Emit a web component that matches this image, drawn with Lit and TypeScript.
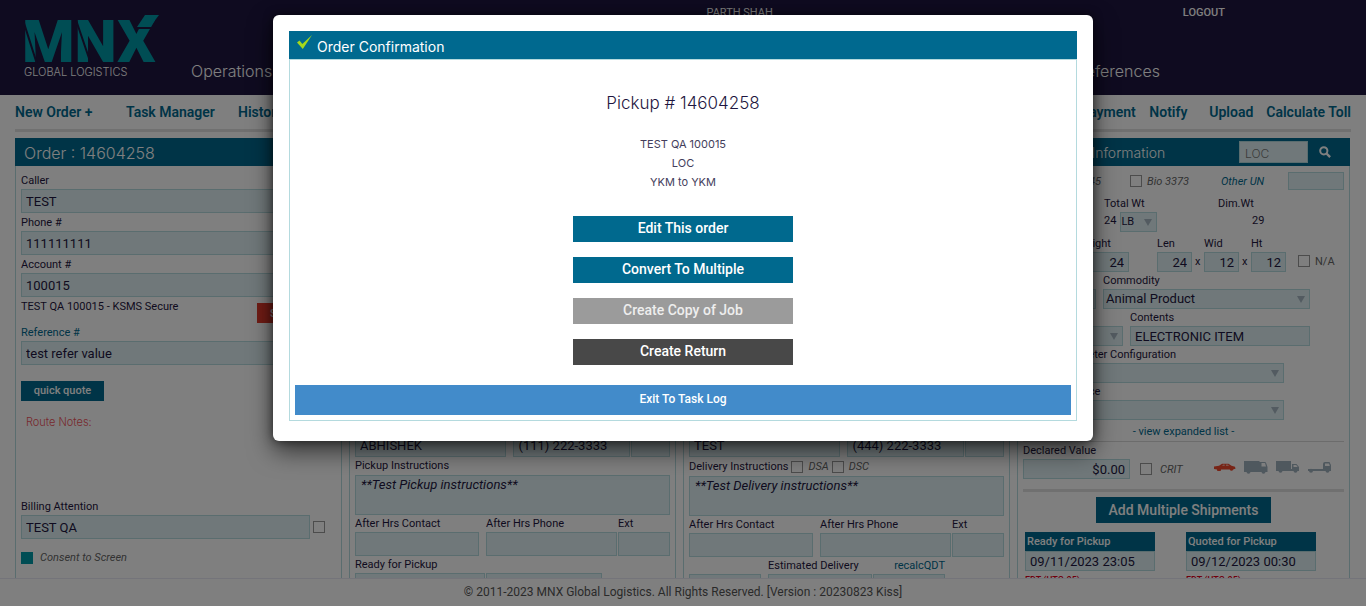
import { LitElement, html, css, svg } from "lit";
import { customElement } from "lit/decorators.js";

const panelHeadings = { order: "Order : 14604258", shipment: "Shipment Information" };

const addressRows = ["Company", "Address", "Address 2", "City", "State", "Country"];

@customElement("app-root")
export class AppRoot extends LitElement {
  static styles = css`
    :host {
      display: block;
      height: 100vh;
      overflow: hidden;
      position: relative;
      background: #fff;
      color: #1e1640;
      font-family: Roboto, "Liberation Sans", sans-serif;
      font-size: 11px;
      --teal: #00698e;
      --line: #b4dade;
      --fill: #e0f1f4;
      --display: Inter, "Open Sans", sans-serif;
    }
    *, *::before, *::after { box-sizing: border-box; }
    a { color: inherit; text-decoration: none; }
    h1, h2, p { margin: 0; font-weight: 400; }
    button { border: 0; padding: 0; margin: 0; font-family: inherit; font-weight: 500; color: #fff; background: var(--teal); cursor: pointer; }

    .page { display: flex; flex-direction: column; height: 100%; }
    .top { display: flex; flex: none; height: 95px; padding-left: 24px; background: #1e1640; color: #fff; }
    .brand { width: 167px; flex: none; padding-top: 14px; }
    .brand svg { display: block; }
    .tagline { font: 300 11px/14px var(--display); margin-top: 1px; }
    .topright { flex: 1; }
    .user { display: flex; justify-content: flex-end; gap: 410px; padding: 5px 141px 0 0; line-height: 15px; font-weight: 500; }
    .user span { font-weight: 400; }
    .mainnav { display: flex; justify-content: space-between; padding: 40px 206px 0 0; font: 300 16px/22px var(--display); }

    .subnav { display: flex; flex: none; justify-content: space-between; margin: 0 15px; height: 37px; border-bottom: 3px solid #e0e0e0; padding-top: 8px; font-size: 14px; line-height: 19px; font-weight: 600; color: var(--teal); }
    .left { display: grid; grid-template-columns: 111px 112px auto; }
    .right { display: grid; grid-template-columns: 69px 60px 57px auto; }

    .work { flex: 1; min-height: 0; overflow: hidden; display: grid; grid-template-columns: 327fr 327fr 327fr 333fr; gap: 7px; padding: 6px 16px 0 15px; }
    .panel { min-width: 0; height: 600px; display: flex; flex-direction: column; }
    .bar { display: flex; align-items: center; flex: none; height: 28px; background: var(--teal); color: #fff; padding: 0 9px; }
    .bar h2 { flex: 1; font: 300 14px/28px var(--display); padding-top: 2px; white-space: nowrap; }
    .bar .number { font-size: 16px; }
    .body { flex: 1; border: 1px solid var(--line); border-width: 0 1px; padding: 5px 5px 0; }
    .body.tight { padding-top: 4px; }

    label, .caption { display: block; line-height: 17px; white-space: nowrap; }
    .roomy label { padding-top: 1px; }
    input, textarea, select { display: block; width: 100%; height: 24px; margin: 0; border: 1px solid var(--line); border-radius: 0; background: var(--fill); color: #1e1640; font: 400 13px/18px Roboto, sans-serif; padding: 0 4px; outline: 0; }
    textarea { height: 40px; resize: none; font-style: italic; padding: 0 5px; overflow: hidden; }
    .low input, .low select { height: 20px; }
    .num { text-align: right; }
    select { appearance: none; padding: 0 20px 0 2px; background-image: url("data:image/svg+xml,%3Csvg xmlns='http://www.w3.org/2000/svg' width='8' height='7'%3E%3Cpath d='M0 0h8L4 7z' fill='%23a6b6c2'/%3E%3C/svg%3E"); background-repeat: no-repeat; background-position: right 4px center; }
    input[type="checkbox"] { appearance: none; flex: none; width: 12px; height: 12px; padding: 0; border: 1px solid #999; background: #fff; }
    input[type="checkbox"].on { border: 0; background: #009aa8; }
    .low input[type="checkbox"] { height: 12px; }
    .em { font-style: italic; color: #666; }
    .link { color: var(--teal); }

    .row { display: flex; }
    .grow { flex: 1; min-width: 0; }
    .mid { align-items: center; }
    .tick { display: flex; align-items: center; gap: 7px; }

    .acct { justify-content: space-between; height: 26px; line-height: 20px; }
    .sop { width: 74px; height: 20px; margin: 6px 5px 0 0; background: #e0392a; font-size: 11px; }
    .quote { display: block; width: 83px; height: 20px; padding-bottom: 1px; margin-top: 16px; font-size: 11px; }
    .notes { min-height: 84px; margin-top: 12px; padding-left: 5px; line-height: 18px; color: #f0525a; font-family: var(--display); font-weight: 300; }
    .billing { align-items: center; gap: 3px; padding-right: 11px; }
    .consent { height: 18px; margin-top: 9px; }

    .trio { display: grid; grid-template-columns: 130fr 131fr 52fr; column-gap: 1px; }
    .trio > :first-child { padding-right: 6px; }
    .contact { grid-template-columns: 158fr 117fr 39fr; }
    .duo { display: grid; grid-template-columns: 130fr 117fr 67fr; gap: 1px; }
    .est { display: grid; grid-template-columns: 78px 104px 72px; column-gap: 1px; }
    .est > :first-child { padding: 17px 6px 0 0; }
    .est .link { text-align: right; }
    .instr { height: 19px; gap: 3px; }
    .instr .tick { gap: 5px; }
    .tall { line-height: 18px; }

    .find { padding-right: 0; }
    .find input { width: 69px; height: 22px; padding: 2px 5px 0; font: 300 12px/18px var(--display); }
    .find input::placeholder { color: #777; opacity: 1; }
    .find button { width: 33px; height: 22px; margin-right: 9px; display: grid; place-items: center; }
    .haz { height: 20px; line-height: 20px; margin-bottom: 4px; }
    .haz .first { display: flex; justify-content: flex-end; padding-right: 29px; }
    .haz .bio { width: 91px; gap: 5px; }
    .haz .other { width: 67px; }
    .haz .un { width: 56px; }
    .haz .un input { height: 18px; }
    .wt { width: 114px; margin-bottom: 3px; }
    .wt .row { gap: 4px; line-height: 17px; }
    .wt select { width: 37px; padding: 0; font-size: 11px; background-position: right 4px center; }
    .dim { width: 126px; }
    .dim p { padding-left: 34px; line-height: 17px; }
    .lead { width: 54px; padding-right: 7px; }
    .weight { flex: 1; padding-right: 28px; }
    .size { width: 47px; }
    .size input { width: 35px; }
    .size .row { gap: 3px; line-height: 20px; }
    .na { width: 46px; gap: 5px; padding-top: 15px; color: #666; }
    .pair { gap: 7px; padding-right: 34px; }
    .com { width: 207px; }
    .cont { width: 180px; }
    .set { padding-right: 60px; }
    .expand { display: block; text-align: center; padding-top: 2px; line-height: 19px; border-bottom: 1px solid #d8d8d8; color: var(--teal); }
    .decl { width: 107px; }
    .crit { gap: 8px; width: 74px; margin-left: 10px; }
    .vehicles { display: flex; gap: 8px; align-items: center; padding-bottom: 4px; }
    .vehicles svg { display: block; }
    .rule { height: 3px; background: #e0e0e0; margin-top: 10px; }
    .multi { display: block; width: 175px; height: 26px; margin: 5px auto 9px; padding-bottom: 1px; font-size: 14px; line-height: 24px; }
    .dates { display: grid; grid-template-columns: 130px 130px; gap: 31px; padding-left: 2px; }
    .dates label { height: 19px; line-height: 19px; padding-left: 2px; background: var(--teal); color: #fff; font-weight: 500; }
    .zone { color: #e0001b; font-size: 9px; line-height: 14px; font-weight: 500; margin-top: 2px; }

    .foot { flex: none; height: 28px; border-top: 1px solid #e8e8f4; background: #fff; text-align: center; font-size: 12px; line-height: 26px; color: #555; position: relative; }

    .shade { position: absolute; inset: 0; background: rgba(0, 0, 0, 0.5); }
    .modal { position: absolute; top: 15px; left: 50%; transform: translateX(-50%); width: min(820px, 92vw); padding: 16px 16px 20px; background: #fff; border-radius: 6px; box-shadow: 0 10px 25px rgba(0, 0, 0, 0.6), 0 0 10px rgba(0, 0, 0, 0.5); }
    .title { display: flex; align-items: flex-start; gap: 4px; height: 28px; padding: 3px 7px 0; background: #00698f; color: #fff; }
    .title h1 { font: 400 14px/25px var(--display); }
    .title svg { display: block; }
    .inner { border: 1px solid var(--line); padding: 31px 5px 5px; display: flex; flex-direction: column; align-items: center; font-family: var(--display); font-weight: 300; line-height: 19px; }
    .inner h2 { font: 300 17px/24px var(--display); margin-bottom: 20px; }
    .inner p { color: #443e5c; }
    .actions { display: grid; gap: 15px; width: 220px; margin: 24px 0 20px; }
    .actions button { height: 26px; font: 500 14px/24px Roboto, sans-serif; padding-bottom: 2px; }
    .actions .copy { background: #9b9b9b; color: #eee; }
    .actions .return { background: #484848; }
    .exit { width: 100%; height: 30px; background: #428bca; font: 500 12px/26px Roboto, sans-serif; padding-bottom: 3px; }
  `;

  private addressFields(prefix: string) {
    return addressRows.map(
      (name) => html`<div class="hold"><label for=${prefix + name}>${name}</label><input id=${prefix + name} /></div>`
    );
  }

  private contactRow(prefix: string, name: string, phone: string) {
    return html`<div class="trio contact">
      <div><label for="${prefix}c">Contact</label><input id="${prefix}c" .value=${name} /></div>
      <div><label for="${prefix}p">Phone</label><input id="${prefix}p" .value=${phone} /></div>
      <div><label for="${prefix}e">Ext</label><input id="${prefix}e" /></div>
    </div>`;
  }

  private afterHours(prefix: string) {
    return html`<div class="trio">
      <div><label for="${prefix}hc">After Hrs Contact</label><input id="${prefix}hc" /></div>
      <div><label for="${prefix}hp">After Hrs Phone</label><input id="${prefix}hp" /></div>
      <div><label for="${prefix}he">Ext</label><input id="${prefix}he" /></div>
    </div>`;
  }

  private size(id: string, label: string, value: string, times: boolean) {
    return html`<div class="size">
      <label for=${id}>${label}</label>
      <div class="row"><input class="num" id=${id} .value=${value} />${times ? html`<span>x</span>` : ""}</div>
    </div>`;
  }

  private logo() {
    return html`<svg width="136" height="50" viewBox="0 0 136 50" role="img" aria-label="MNX">
      <text x="-2" y="48" font-family="Roboto" font-weight="900" font-size="60" fill="#009aa8">MNX</text>
      ${svg`<path d="M-1 6L13 50M52 6L67 50" stroke="#1e1640" stroke-width="2"/>
      <path d="M121 1h14l-9 12h-13z" fill="#009aa8"/>
      <path d="M112 14h16" stroke="#1e1640" stroke-width="2"/>`}
    </svg>`;
  }

  private vehicles() {
    return html`<div class="vehicles">
      <svg width="22" height="8" viewBox="0 0 22 8"><path d="M0 3.500l5-.8L8 .8h6.500l3 2 3.500.9.5 2-2 .6a2 2 0 01-3.800.2H7A2 2 0 013 6.500L0 6z" fill="#f0492c"/><path d="M8 2.500l1.200-.8h1.500v.8zM12 1.700h2l1 .8h-3z" fill="#fff"/></svg>
      <svg width="24" height="13" viewBox="0 0 24 13"><path d="M0 0h15.500v1H21q1 0 1.500 2l1 3v5H0z" fill="#9fb0bd"/><path d="M17.500 2H21l1 3.500h-4.500z" fill="#fff"/><circle cx="4.500" cy="10.700" r="2" fill="#9fb0bd"/><circle cx="19.500" cy="10.700" r="2" fill="#9fb0bd"/></svg>
      <svg width="24" height="12" viewBox="0 0 24 12"><path d="M0 0h15v8h1V3h4.500L23 6v4H0z" fill="#9fb0bd"/><path d="M17.500 4h2.700l1.500 2h-4.200z" fill="#fff"/><circle cx="4.500" cy="9.800" r="2" fill="#9fb0bd"/><circle cx="19.500" cy="9.800" r="2" fill="#9fb0bd"/></svg>
      <svg width="24" height="12" viewBox="0 0 24 12"><path d="M0 8h15V3q0-2 2-2h4.500L23 4v6H0z" fill="#9fb0bd"/><path d="M17 2.500h4l.8 2.500H17z" fill="#fff"/><circle cx="3" cy="9.800" r="2" fill="#9fb0bd"/><circle cx="19.500" cy="9.800" r="2" fill="#9fb0bd"/></svg>
    </div>`;
  }

  render() {
    return html`
      <div class="page">
        <header class="top">
          <div class="brand">${this.logo()}<p class="tagline">GLOBAL LOGISTICS</p></div>
          <div class="topright">
            <div class="user"><span>PARTH SHAH</span><a href="#logout">LOGOUT</a></div>
            <nav class="mainnav"><a href="#operations">Operations</a><a href="#preferences">Preferences</a></nav>
          </div>
        </header>
        <nav class="subnav">
          <div class="left"><a href="#new">New Order +</a><a href="#tasks">Task Manager</a><a href="#history">History</a></div>
          <div class="right"><a href="#payment">Payment</a><a href="#notify">Notify</a><a href="#upload">Upload</a><a href="#toll">Calculate Toll</a></div>
        </nav>
        <main class="work">
          <section class="panel">
            <div class="bar"><h2 class="number">${panelHeadings.order}</h2></div>
            <div class="body roomy">
              <label for="caller">Caller</label><input id="caller" value="TEST" />
              <label for="phone">Phone #</label><input id="phone" value="111111111" />
              <label for="account">Account #</label><input id="account" value="100015" />
              <div class="row acct"><span>TEST QA 100015 - KSMS Secure</span><button class="sop">See SOPs</button></div>
              <label class="link" for="ref">Reference #</label><input id="ref" value="test refer value" />
              <button class="quote">quick quote</button>
              <p class="notes">Route Notes:</p>
              <label for="billing">Billing Attention</label>
              <div class="row billing"><input id="billing" value="TEST QA" /><input type="checkbox" aria-label="Billing attention" /></div>
              <label class="tick consent em"><input class="on" type="checkbox" />Consent to Screen</label>
            </div>
          </section>

          <section class="panel">
            <div class="bar"></div>
            <div class="body tight">
              ${this.addressFields("pu")} ${this.contactRow("pu", "ABHISHEK", "(111) 222-3333")}
              <label class="tall" for="pui">Pickup Instructions</label>
              <textarea id="pui" .value=${"**Test Pickup instructions**"}></textarea>
              ${this.afterHours("pu")}
              <label for="pur">Ready for Pickup</label>
              <div class="duo"><input id="pur" /><input aria-label="Ready time" /></div>
            </div>
          </section>

          <section class="panel">
            <div class="bar"></div>
            <div class="body tight">
              ${this.addressFields("de")} ${this.contactRow("de", "TEST", "(444) 222-3333")}
              <div class="row mid instr">
                <label for="dei">Delivery Instructions</label>
                <label class="tick em"><input type="checkbox" />DSA</label>
                <label class="tick em"><input type="checkbox" />DSC</label>
              </div>
              <textarea id="dei" .value=${"**Test Delivery instructions**"}></textarea>
              ${this.afterHours("de")}
              <div class="est">
                <div><input aria-label="Delivery type" /></div>
                <div><label for="ded">Estimated Delivery</label><input id="ded" /></div>
                <div><a class="caption link" href="#recalc">recalcQDT</a><input aria-label="Delivery time" /></div>
              </div>
            </div>
          </section>

          <section class="panel">
            <div class="bar find">
              <h2>${panelHeadings.shipment}</h2>
              <input placeholder="LOC" aria-label="Location" />
              <button aria-label="Search"><svg width="12" height="12" viewBox="0 0 12 12"><circle cx="4.800" cy="4.800" r="3.600" fill="none" stroke="#fff" stroke-width="2"/><path d="M7.500 7.500l3.600 3.600" stroke="#fff" stroke-width="2.400"/></svg></button>
            </div>
            <div class="body low">
              <div class="row mid haz">
                <label class="grow first em">UN 1845</label>
                <label class="tick bio em"><input type="checkbox" />Bio 3373</label>
                <label class="other em link" for="un">Other UN</label>
                <div class="un"><input id="un" /></div>
              </div>
              <div class="row">
                <div class="grow"></div>
                <div class="wt"><label for="unit">Total Wt</label><div class="row"><span>24</span><select id="unit"><option>LB</option></select></div></div>
                <div class="dim"><span class="caption">Dim.Wt</span><p>29</p></div>
              </div>
              <div class="row">
                <div class="lead"><label for="pcs">Pieces</label><input id="pcs" /></div>
                <div class="weight"><label for="weight">Weight</label><input class="num" id="weight" value="24" /></div>
                ${this.size("len", "Len", "24", true)} ${this.size("wid", "Wid", "12", true)} ${this.size("ht", "Ht", "12", false)}
                <label class="tick na"><input type="checkbox" />N/A</label>
              </div>
              <div class="row pair">
                <div class="grow"><label for="pkg">Package</label><select id="pkg"></select></div>
                <div class="com"><label for="com">Commodity</label><select id="com"><option>Animal Product</option></select></div>
              </div>
              <div class="row pair">
                <div class="grow"><label for="temp">Temperature</label><select id="temp"></select></div>
                <div class="cont"><label for="cont">Contents</label><input id="cont" value="ELECTRONIC ITEM" /></div>
              </div>
              <div class="set"><label for="cfg">Temp. Parameter Configuration</label><select id="cfg"></select></div>
              <div class="set"><label for="dev">Tracking Device</label><select id="dev"></select></div>
              <a class="expand" href="#expand">- view expanded list -</a>
              <label for="decl">Declared Value</label>
              <div class="row">
                <div class="decl"><input class="num" id="decl" value="$0.00" /></div>
                <label class="tick crit em"><input type="checkbox" />CRIT</label>
                ${this.vehicles()}
              </div>
              <div class="rule"></div>
              <button class="multi">Add Multiple Shipments</button>
              <div class="dates">
                <div><label for="rp">Ready for Pickup</label><input id="rp" value="09/11/2023 23:05" /><p class="zone">EDT (UTC-05)</p></div>
                <div><label for="qp">Quoted for Pickup</label><input id="qp" value="09/12/2023 00:30" /><p class="zone">EDT (UTC-05)</p></div>
              </div>
            </div>
          </section>
        </main>
        <footer class="foot">© 2011-2023 MNX Global Logistics. All Rights Reserved. [Version : 20230823 Kiss]</footer>
      </div>
      <div class="shade"></div>
      <div class="modal" role="dialog" aria-modal="true" aria-label="Order Confirmation">
        <div class="title">
          <svg width="17" height="17" viewBox="0 0 17 17"><path d="M1 8.500l2.500-2 2.800 3.600L16 1 6.800 15z" fill="#a4d81c"/></svg>
          <h1>Order Confirmation</h1>
        </div>
        <div class="inner">
          <h2>Pickup # 14604258</h2>
          <p>TEST QA 100015</p>
          <p>LOC</p>
          <p>YKM to YKM</p>
          <div class="actions">
            <button>Edit This order</button>
            <button>Convert To Multiple</button>
            <button class="copy">Create Copy of Job</button>
            <button class="return">Create Return</button>
          </div>
          <button class="exit">Exit To Task Log</button>
        </div>
      </div>
    `;
  }
}
